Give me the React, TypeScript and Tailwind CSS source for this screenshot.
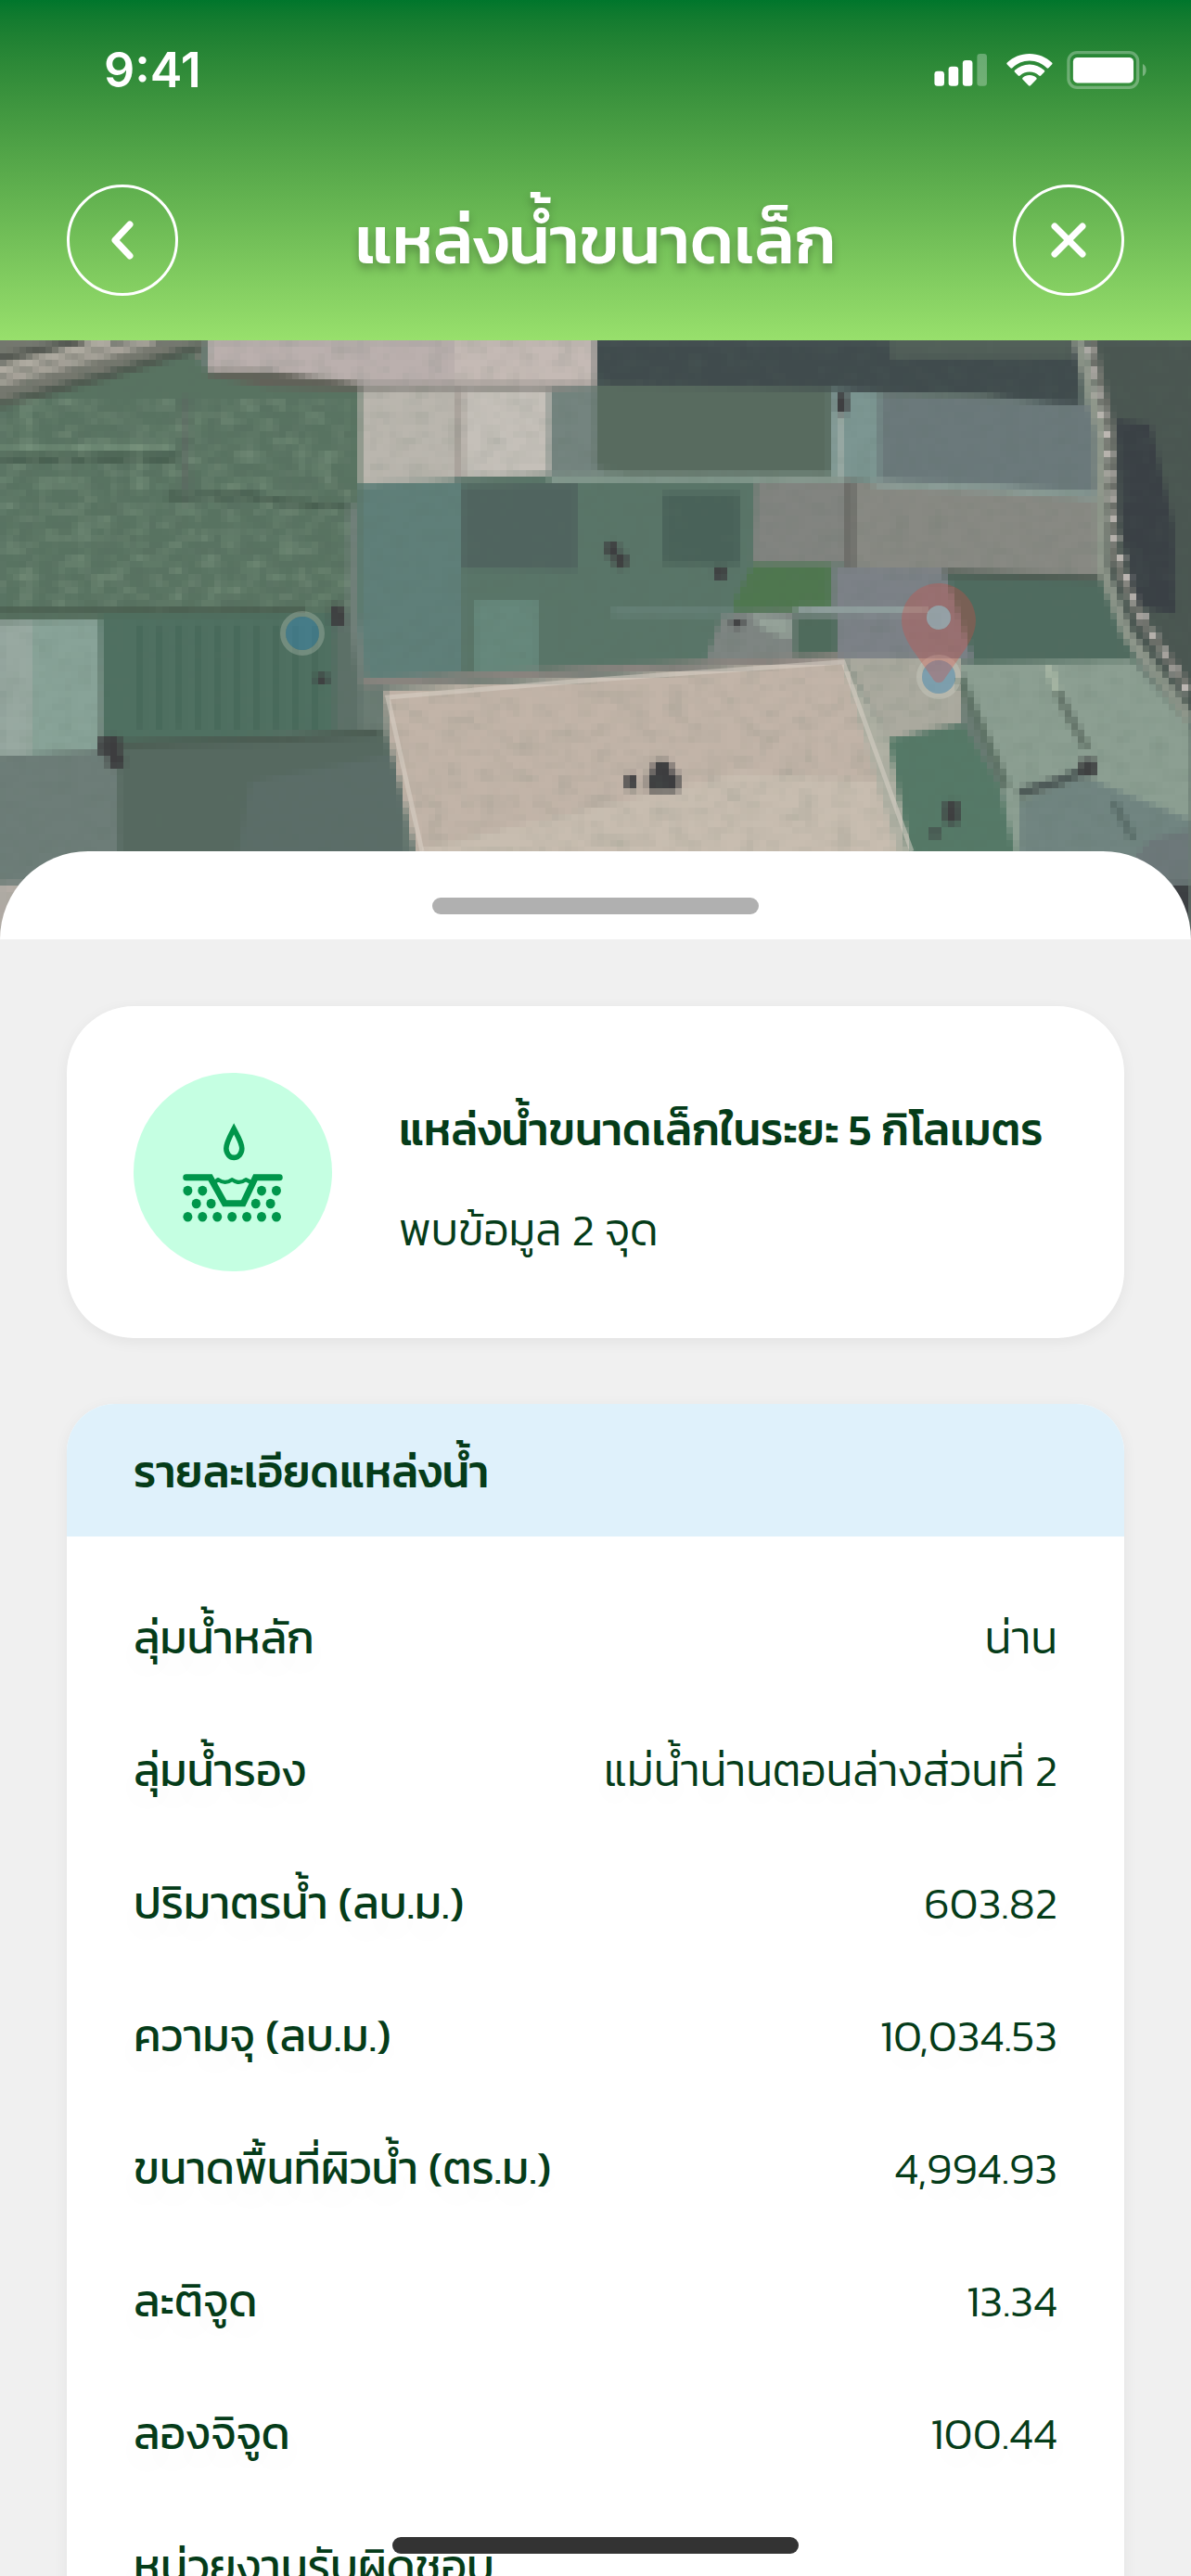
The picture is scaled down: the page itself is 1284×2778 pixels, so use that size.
import type { ReactNode } from 'react';

const details = [
  { label: 'ลุ่มน้ำหลัก', value: 'น่าน' },
  { label: 'ลุ่มน้ำรอง', value: 'แม่น้ำน่านตอนล่างส่วนที่ 2' },
  { label: 'ปริมาตรน้ำ (ลบ.ม.)', value: '603.82' },
  { label: 'ความจุ (ลบ.ม.)', value: '10,034.53' },
  { label: 'ขนาดพื้นที่ผิวน้ำ (ตร.ม.)', value: '4,994.93' },
  { label: 'ละติจูด', value: '13.34' },
  { label: 'ลองจิจูด', value: '100.44' },
  { label: 'หน่วยงานรับผิดชอบ', value: '' },
];

// Each field of the satellite view: outline and base colour
const fields: [string, string][] = [
  ['0,367 222,367 215,385 0,440', '#76786f'],
  ['0,432 110,405 200,375 225,400 388,418 388,660 0,660', '#587361'],
  ['195,425 205,425 205,540 195,540', '#5b6b61'],
  ['225,367 642,367 642,413 388,413 290,412 225,398', '#bbb0ae'],
  ['490,367 642,367 642,413 490,413', '#c5bab5'],
  ['222,399 290,399 388,412 388,420 290,416 222,404', '#626259'],
  ['388,412 642,412 642,419 388,419', '#8f8a85'],
  ['388,419 490,419 490,514 388,518', '#bab6ae'],
  ['490,419 500,419 500,508 490,512', '#aaa39c'],
  ['500,419 592,419 592,507 500,510', '#c5c0b9'],
  ['592,419 650,415 650,520 592,514', '#74847f'],
  ['388,518 592,508 650,507 815,510 815,700 642,715 388,724', '#597568'],
  ['388,518 498,514 498,715 388,724', '#5f7f79'],
  ['498,520 622,516 622,608 498,606', '#50645f'],
  ['715,527 797,527 797,602 715,602', '#496259'],
  ['512,640 580,640 580,712 512,714', '#66887c'],
  ['642,367 1165,367 1165,436 1060,424 642,413', '#404b4d'],
  ['960,367 1155,367 1155,386 960,386', '#515e58'],
  ['642,413 895,418 895,507 680,507 642,500', '#586b5f'],
  ['895,418 948,422 948,516 895,510', '#7c9692'],
  ['948,424 1190,435 1190,532 948,514', '#6b797b'],
  ['815,513 915,513 915,600 812,600', '#828480'],
  ['915,515 1190,535 1190,615 915,605', '#888983'],
  ['910,515 922,515 922,606 910,606', '#6d6d69'],
  ['1018,610 1195,616 1225,708 1030,710', '#4f6b5f'],
  ['792,640 812,602 895,602 895,650 792,650', '#4f774f'],
  ['900,605 1018,607 1050,703 900,703', '#7c8187'],
  ['780,652 855,652 855,702 760,705', '#7e8582'],
  ['808,655 852,658 852,680 825,672', '#98a59c'],
  ['858,658 902,658 902,700 858,700', '#4f6b5c'],
  ['0,662 108,660 108,796 0,803', '#88a398'],
  ['0,662 35,662 35,800 0,803', '#98a9a1'],
  ['108,655 388,653 388,775 112,790', '#4f7061'],
  ['360,655 388,655 388,775 360,776', '#5d7068'],
  ['0,803 125,797 130,945 0,945', '#6d7d78'],
  ['128,790 415,778 440,918 440,940 128,940', '#566960'],
  ['270,830 430,800 440,940 250,940', '#5b6d68'],
  ['0,937 130,937 130,1013 0,1013', '#b5aea7'],
  ['415,733 642,721 910,702 990,930 455,930 418,780', '#c2b4a8'],
  ['455,900 800,820 950,830 985,930 455,930', '#c8bdb0'],
  ['910,700 1037,700 1037,768 958,785', '#abaa9f'],
  ['908,702 958,785 1000,930 975,930', '#b0b1a4'],
  ['1035,706 1220,702 1284,775 1284,940 1090,930 1080,830', '#8c9f92'],
  ['1100,850 1170,825 1284,870 1284,960 1100,940', '#718581'],
  ['958,785 1038,770 1078,835 1100,930 985,930', '#557967'],
  ['1240,890 1284,880 1284,1013 1200,940', '#6d787a'],
  ['1255,938 1284,938 1284,1013 1255,1000', '#3c3f42'],
  ['1170,367 1292,367 1292,770 1215,665 1192,600 1190,460', '#4a5651'],
  ['1204,450 1240,455 1265,560 1268,655 1225,645 1208,560', '#3a4045'],
];

// Tracks, banks and hedges between the fields: points, colour, width
const tracks: [string, string, number][] = [
  ['0,385 90,367', '#4f524c', 6],
  ['0,398 120,367', '#b7b1a7', 8],
  ['0,410 165,367', '#a9a49b', 9],
  ['0,434 110,405 215,374', '#4f5a50', 9],
  ['0,490 192,490', '#43594b', 8],
  ['0,482 190,478', '#6b8772', 8],
  ['180,530 270,530 300,536 375,542', '#465c4e', 8],
  ['0,651 100,650 330,650', '#4b6051', 8],
  ['112,791 300,785 410,778', '#4b5c52', 8],
  ['380,540 380,650 392,730', '#71807a', 10],
  ['592,512 680,511 910,511', '#869b90', 8],
  ['942,517 1080,523 1192,531', '#8b9d97', 8],
  ['905,425 905,512', '#9aaaa4', 8],
  ['1018,611 1190,617', '#4e5a52', 7],
  ['660,652 790,652', '#6a857d', 7],
  ['858,650 900,650 1000,650', '#91a09f', 8],
  ['390,726 642,713 905,699', '#8c8580', 8],
  ['1035,722 1085,835', '#5e7265', 9],
  ['1130,708 1140,735', '#a9b8a6', 9],
  ['1140,735 1155,765 1172,795', '#65756a', 9],
  ['1098,842 1140,830 1180,814', '#4c5856', 10],
  ['1200,850 1222,890', '#596c68', 8],
  ['1162,367 1186,460 1188,605 1215,675 1284,765', '#8f978b', 12],
  ['1176,367 1197,460 1200,590 1230,660 1284,735', '#6f716b', 10],
];

// Tree crowns and their shadows
const trees: [number, number, number, number][] = [
  [106, 782, 24, 20],
  [116, 800, 18, 16],
  [356, 644, 16, 22],
  [340, 717, 14, 10],
  [653, 578, 14, 16],
  [662, 590, 14, 16],
  [770, 604, 13, 14],
  [788, 660, 14, 8],
  [902, 422, 12, 22],
  [674, 822, 12, 16],
  [704, 808, 20, 20],
  [698, 820, 34, 20],
  [1018, 850, 16, 24],
  [1002, 880, 12, 8],
  [1164, 806, 18, 18],
];

function SatelliteMap() {
  return (
    <svg viewBox="0 367 1284 646" preserveAspectRatio="xMidYMin slice" className="h-full w-full" aria-hidden="true">
      <defs>
        <filter id="grainDark" x="0" y="0" width="100%" height="100%">
          <feTurbulence type="fractalNoise" baseFrequency="0.05 0.07" numOctaves="3" seed="4" />
          <feColorMatrix values="0 0 0 0 0.1  0 0 0 0 0.16  0 0 0 0 0.12  1.6 0 0 0 -0.7" />
        </filter>
        <filter id="grainLight" x="0" y="0" width="100%" height="100%">
          <feTurbulence type="fractalNoise" baseFrequency="0.05 0.07" numOctaves="3" seed="11" />
          <feColorMatrix values="0 0 0 0 0.3  0 0 0 0 0.42  0 0 0 0 0.3  1.6 0 0 0 -0.7" />
        </filter>
        {/* Samples one pixel out of each 7x7 tile and spreads it over the tile */}
        <filter
          id="pixelate"
          filterUnits="userSpaceOnUse"
          x="0"
          y="367"
          width="1295"
          height="651"
          colorInterpolationFilters="sRGB"
        >
          <feGaussianBlur in="SourceGraphic" stdDeviation="2" result="soft" />
          <feFlood x="3" y="370" width="1" height="1" floodColor="#000" result="dot" />
          <feOffset in="dot" x="0" y="367" width="7" height="7" />
          <feTile result="dots" />
          <feComposite in="soft" in2="dots" operator="in" />
          <feMorphology operator="dilate" radius="3" />
        </filter>
        <pattern id="furrows" width="21" height="21" patternUnits="userSpaceOnUse">
          <rect width="8" height="21" fill="#3f6152" opacity="0.4" />
        </pattern>
      </defs>
      <rect y="367" width="1284" height="646" fill="#6b7c74" />
      <g filter="url(#pixelate)">
        <g transform="matrix(1 0 0 1.028 0 -10)">
          {fields.map(([points, fill]) => (
            <polygon key={points} points={points} fill={fill} />
          ))}
          <rect x="135" y="665" width="225" height="110" fill="url(#furrows)" />
          {tracks.map(([points, stroke, width]) => (
            <polyline key={points} points={points} stroke={stroke} strokeWidth={width} fill="none" />
          ))}
          {trees.map(([x, y, w, h]) => (
            <rect key={`${x}-${y}`} x={x} y={y} width={w} height={h} rx="4" fill="#3d3d3f" />
          ))}
          <polyline
            points="1174,375 1195,475 1201,570 1222,640 1284,742"
            stroke="#c8c0bc"
            strokeWidth="9"
            strokeDasharray="8 14"
            fill="none"
          />
        </g>
        <rect y="367" width="1292" height="646" filter="url(#grainDark)" opacity="0.25" />
        <rect y="430" width="380" height="226" filter="url(#grainDark)" opacity="0.55" />
        <rect y="430" width="380" height="226" filter="url(#grainLight)" opacity="0.6" />
      </g>
      <path d="M455 918L418 752l224-19 267-19 74 204" fill="none" stroke="#dcd3ca" strokeWidth="5" opacity="0.5" />

      <WaterPoint cx={326} cy={683} />
      <WaterPoint cx={1012} cy={730} />
      <path
        d="M1012 629c-22 0-40 18-40 40 0 15 9 28 17 39l18 26c3 3 7 3 10 0l18-26c8-11 17-24 17-39 0-22-18-40-40-40zm0 24a13 13 0 1 1 0 26 13 13 0 0 1 0-26z"
        fill="#dc4a40"
        fillRule="evenodd"
        opacity="0.3"
      />
      <circle cx="1012" cy="666" r="13" fill="#c5dce2" opacity="0.35" />
    </svg>
  );
}

function WaterPoint({ cx, cy }: { cx: number; cy: number }) {
  return (
    <g>
      <circle cx={cx} cy={cy} r="21" fill="none" stroke="#dfe5d8" strokeWidth="6" opacity="0.25" />
      <circle cx={cx} cy={cy} r="18" fill="#3a8fc4" opacity="0.4" />
    </g>
  );
}

function StatusIcons() {
  return (
    <svg viewBox="138 84 692 124" className="h-[41px] w-[231px]" fill="#fff" aria-hidden="true">
      <rect x="139" y="150" width="32" height="48" rx="10" />
      <rect x="185" y="135" width="32" height="63" rx="10" />
      <rect x="231" y="114" width="32" height="84" rx="10" />
      <rect x="278" y="93" width="32" height="105" rx="10" opacity="0.3" />
      <path d="M449 93c29 0 54 11 73 29 2 2 2 4 0 6l-11 11c-2 2-4 2-6 0-15-14-34-23-56-23s-41 9-56 23c-2 2-4 2-6 0l-11-11c-2-2-2-4 0-6 19-18 44-29 73-29z" />
      <path d="M449 128c19 0 35 7 48 19 2 2 2 4 0 6l-11 11c-2 2-4 2-6 0-8-7-19-12-31-12s-23 5-31 12c-2 2-4 2-6 0l-11-11c-2-2-2-4 0-6 13-12 29-19 48-19z" />
      <path d="M449 163c9 0 16 3 22 8 2 2 2 4 0 6l-19 20c-2 2-4 2-6 0l-19-20c-2-2-2-4 0-6 6-5 13-8 22-8z" />
      <rect x="576" y="89" width="226" height="114" rx="28" fill="none" stroke="#fff" strokeWidth="10" opacity="0.3" />
      <rect x="591" y="105" width="197" height="83" rx="14" />
      <path d="M818 126c15 6 15 34 0 40z" opacity="0.35" />
    </svg>
  );
}

const soilDots: [number, number][] = [
  [216, 431], [264, 431], [456, 431], [504, 431],
  [244, 473], [292, 473], [437, 473], [485, 473],
  [216, 516], [264, 516], [312, 516], [360, 516], [408, 516], [456, 516], [504, 516],
];

function ReservoirIcon() {
  return (
    <svg viewBox="40 48 645 645" className="h-full w-full" aria-hidden="true">
      <path
        d="M366 230c-13 25-25 45-25 64a25 29 0 0 0 51 0c0-19-13-39-26-64z"
        fill="none"
        stroke="#00964b"
        strokeWidth="17"
      />
      <g fill="none" stroke="#00964b" strokeLinecap="round">
        <path d="M211 388h78l47 84h60l40-84h78" strokeWidth="21" />
        <path d="M305 402l10-7c15 11 30 11 45 0 15 11 30 11 45 0l14 7" strokeWidth="13" strokeLinejoin="round" />
      </g>
      {soilDots.map(([x, y]) => (
        <ellipse key={`${x}-${y}`} cx={x} cy={y} rx="15" ry="16" fill="#00964b" />
      ))}
    </svg>
  );
}

function RoundButton({ label, children }: { label: string; children: ReactNode }) {
  return (
    <button
      type="button"
      aria-label={label}
      className="flex size-30 shrink-0 items-center justify-center rounded-full border-3 border-white"
    >
      <svg viewBox="0 0 48 48" className="size-12" fill="none" stroke="#fff" strokeWidth="7" strokeLinecap="round" strokeLinejoin="round">
        {children}
      </svg>
    </button>
  );
}

export default function App() {
  return (
    <div className="relative flex h-screen flex-col overflow-hidden bg-[#f0f0f0] font-['Kanit','Noto_Sans_Thai','Noto_Sans',sans-serif] text-[#053c19]">
      <header className="shrink-0 bg-linear-to-b from-[#00762c] to-[#98e06c] text-white">
        <div className="flex h-[151px] items-center justify-between pr-[47px] pl-28">
          <span className="font-['Inter',sans-serif] text-[52px] font-semibold">9:41</span>
          <StatusIcons />
        </div>
        <div className="flex items-center justify-between px-18 py-12">
          <RoundButton label="ย้อนกลับ">
            <path d="M32 7L16 24l16 17" />
          </RoundButton>
          <h1 className="text-[72px] leading-[120px] font-medium [text-shadow:0_6px_10px_rgba(0,0,0,0.25)]">แหล่งน้ำขนาดเล็ก</h1>
          <RoundButton label="ปิด">
            <path d="M9 9l30 30M39 9L9 39" />
          </RoundButton>
        </div>
      </header>

      <div className="h-[646px] shrink-0">
        <SatelliteMap />
      </div>

      <div className="relative -mt-[95px] flex h-[95px] shrink-0 justify-center rounded-t-[95px] bg-white pt-[50px]">
        <div className="h-[18px] w-88 rounded-full bg-[#b0b0b0]" />
      </div>

      <main className="flex min-h-0 flex-1 flex-col gap-[71px] overflow-hidden px-18 pt-18">
        <section className="flex shrink-0 items-center gap-18 rounded-[72px] bg-white p-18 shadow-[0_4px_16px_rgba(0,0,0,0.06)]">
          <div className="size-[214px] shrink-0 rounded-full bg-[#c5ffe2]">
            <ReservoirIcon />
          </div>
          <div className="flex flex-col gap-9 pt-4 whitespace-nowrap">
            <h2 className="text-[48px] leading-[72px] font-medium">แหล่งน้ำขนาดเล็กในระยะ 5 กิโลเมตร</h2>
            <p className="text-[48px] leading-[72px] font-light">พบข้อมูล 2 จุด</p>
          </div>
        </section>

        <section className="shrink-0 overflow-hidden rounded-t-[52px] bg-white shadow-[0_4px_16px_rgba(0,0,0,0.06)]">
          <h2 className="bg-[#dff1fb] px-18 pt-1 text-[48px] leading-[139px] font-medium">รายละเอียดแหล่งน้ำ</h2>
          <dl className="px-18 pt-[38px]">
            {details.map(({ label, value }) => (
              <div
                key={label}
                className="flex justify-between text-[48px] leading-[143px] whitespace-nowrap [text-shadow:0_14px_36px_rgba(0,0,0,0.05)]"
              >
                <dt className="font-normal">{label}</dt>
                <dd className="font-light">{value}</dd>
              </div>
            ))}
          </dl>
        </section>
      </main>

      <div className="absolute bottom-6 left-1/2 h-[18px] w-[438px] -translate-x-1/2 rounded-full bg-[#333]" />
    </div>
  );
}
